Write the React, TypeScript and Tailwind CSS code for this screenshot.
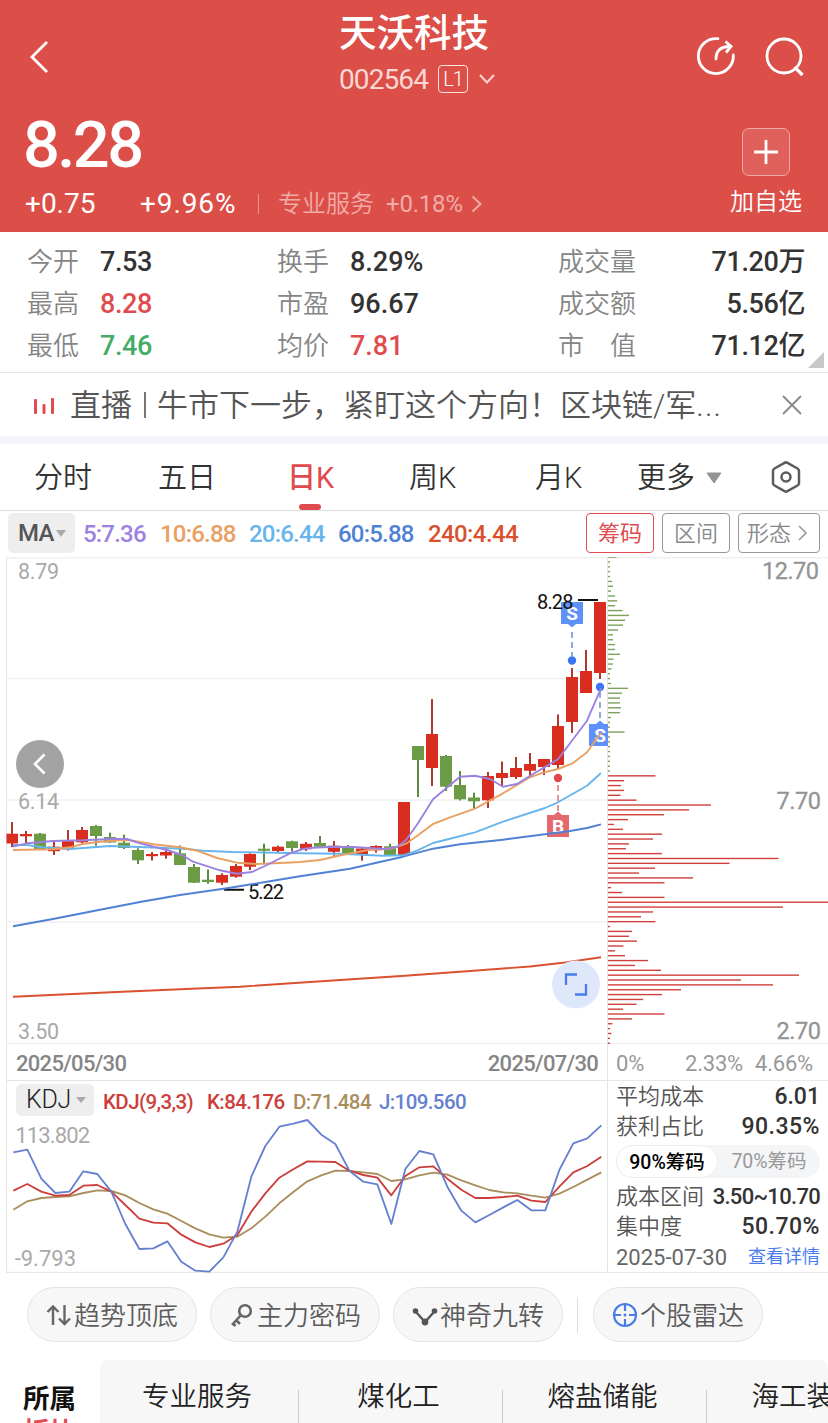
import { memo } from "react";

// ─── Types ─────────────────────────────────────────────────────────────────────
// [wick top, wick bottom, body top, body bottom, rising]
type Candle = [number, number, number, number, boolean];
type Point = [number, number];

// ─── Candles ───────────────────────────────────────────────────────────────────
const CANDLES: Candle[] = [
  [822, 847, 833.7, 843.5, true],
  [831, 846, 834, 836.3, true],
  [833, 849.3, 833.7, 849, false],
  [840, 855, 846.7, 851.2, true],
  [830, 850.5, 841, 849.3, true],
  [827, 843, 830, 842.3, true],
  [825, 845.7, 826, 836, false],
  [832.7, 842.7, 837, 842.5, false],
  [834.7, 849, 842.7, 848, false],
  [848.3, 864, 850, 860.3, false],
  [852, 860.5, 854, 856.2, true],
  [849.3, 858.7, 852, 855.5, true],
  [845.5, 865, 853.3, 865, false],
  [864, 883, 867, 882.7, false],
  [869.5, 883.7, 879.7, 882, false],
  [873.3, 885, 875, 882.7, true],
  [864, 877.7, 866, 876.7, true],
  [853.3, 870, 854, 866.7, true],
  [843.7, 864, 848.7, 850.8, false],
  [845.7, 852, 846.7, 851, true],
  [840.7, 851.7, 841.3, 848, false],
  [842, 851, 843.8, 849.2, true],
  [836, 846.8, 843, 846.8, false],
  [841, 855.7, 845.7, 851.8, true],
  [845, 853.3, 846, 853, false],
  [848.3, 860.7, 848.5, 855, true],
  [845.3, 852.7, 846, 850.3, true],
  [843.7, 855.3, 846.3, 855.3, false],
  [802, 855, 802, 855, true],
  [746, 797, 746, 760, false],
  [699, 786, 734, 768, true],
  [755, 791, 756, 786.7, false],
  [771, 800.5, 785, 799.3, false],
  [792.7, 808, 797.5, 801.3, false],
  [772, 808, 776, 800.3, true],
  [761.5, 786, 773, 778, true],
  [757, 779, 768, 777, true],
  [753, 777, 764, 770.7, true],
  [759, 775, 759, 767, true],
  [714.5, 769, 726, 765, true],
  [668, 733, 677, 722, true],
  [650, 693, 671, 693, true],
  [602, 679, 602, 673, true],
];

// ─── Moving averages ───────────────────────────────────────────────────────────
const MA_LINES: { color: string; points: Point[] }[] = [
  {
    color: "#d9512f",
    points: [[13, 996.7], [100, 992.7], [180, 989.3], [240, 986.7], [310, 982], [405, 975.8], [470, 971], [530, 966.5], [565, 962.5], [601, 957.3]],
  },
  {
    color: "#4f82d4",
    points: [[13, 926.3], [53, 919], [100, 909.7], [140, 902], [180, 895], [227, 888.3], [267, 881.7], [300, 876.3], [350, 868.7], [403, 856.7], [433, 848.7], [460, 844.3], [503, 839.7], [545, 834.3], [570, 831], [587, 828], [601, 824.3]],
  },
  {
    color: "#68b5ec",
    points: [[13, 845], [27, 845], [43, 847.3], [70, 849], [110, 846], [160, 847.7], [187, 849], [203, 850.7], [233, 852], [277, 852.7], [300, 853.3], [340, 853.7], [383, 855.7], [403, 855.3], [417, 850.7], [433, 843], [453, 838], [475, 832.3], [503, 821.7], [545, 808], [558, 802.3], [573, 793.7], [587, 785.7], [601, 773]],
  },
  {
    color: "#e9a063",
    points: [[13, 850], [53, 849.3], [70, 847.3], [83, 844], [100, 841.7], [123, 840], [130, 840.3], [153, 844.3], [180, 847.3], [197, 850.7], [217, 858], [237, 862.7], [257, 864], [280, 863], [300, 862], [320, 860], [343, 854.7], [367, 850.3], [393, 848.3], [406, 843.7], [418, 835.3], [433, 824], [450, 817.3], [475, 808.7], [503, 793.3], [530, 777.3], [543, 772.7], [558, 769], [572, 763.7], [587, 752.3], [601, 732.7]],
  },
  {
    color: "#9c82e0",
    points: [[13, 846.7], [27, 843.3], [53, 841], [83, 840.3], [110, 839], [127, 839], [140, 843.3], [167, 850], [182, 855], [193, 861.7], [220, 870.3], [237, 873.7], [252, 872], [267, 865], [290, 853.3], [303, 849], [313, 847.7], [333, 846.7], [357, 847.3], [385, 849], [397, 847], [406, 840], [418, 823.3], [433, 799.3], [460, 776.7], [475, 775.7], [490, 779], [503, 786.7], [517, 784], [533, 774], [558, 759.3], [587, 720.7], [601, 688.3]],
  },
];

// ─── Chip distribution: one bar per price step, top price first ────────────────
const CHIPS = [
  8.5, 2, 2, 2, 2, 4, 5, 3, 7, 9, 7, 14.5, 21, 17, 15, 10, 5, 5, 7, 7, 12, 5.5, 5, 3.5, 2,
  2, 3, 20, 14, 12, 12, 13, 12, 3, 2, 2, 16.5, 2, 2, 2, 2, 2, 2, 2, 2, 47.5, 16, 13, 16, 12.5,
  28.5, 103, 81, 56, 20, 6, 15, 54, 45, 21, 18, 54, 170.5, 121.5, 47, 31, 85, 56.5, 3, 14, 56.5,
  220, 175, 45, 33, 47.5, 2, 24, 21, 29, 15.5, 7, 17, 40, 27, 53, 191, 133, 165, 73, 54, 35,
  28.5, 15, 56.5, 24, 4.5, 2, 3.5, 2, 2,
];
const FIRST_RED_CHIP = 45;

// ─── KDJ series ────────────────────────────────────────────────────────────────
const K_LINE = [452, 432, 455, 467, 465, 437, 435, 455, 495, 536, 548, 550, 584, 607, 621, 611, 585, 515, 460, 413, 388, 364, 365, 366, 392, 405, 413, 466, 408, 382, 379, 416, 449, 474, 474, 471, 467, 482, 486, 440, 397, 378, 350];
const D_LINE = [509, 484, 474, 471, 469, 459, 451, 453, 466, 489, 508, 521, 543, 565, 583, 593, 590, 565, 530, 490, 456, 424, 406, 392, 393, 397, 402, 423, 418, 406, 398, 404, 421, 436, 450, 457, 460, 467, 473, 461, 441, 419, 397];
const J_LINE = [337, 329, 416, 459, 455, 394, 402, 455, 552, 627, 625, 604, 665, 692, 695, 652, 575, 410, 318, 260, 251, 240, 284, 312, 392, 425, 433, 552, 387, 333, 343, 440, 512, 547, 525, 502, 480, 511, 511, 390, 310, 295, 256];

const toPath = (pts: Point[]) => pts.map(([x, y]) => `${x},${y}`).join(" ");
const kdjPath = (values: number[]) => toPath(values.map((v, i): Point => [40 + i * 42, v]));

// ─── Header ────────────────────────────────────────────────────────────────────
function Header() {
  return (
    <header className="flex h-[232px] flex-col bg-[#dc4f49] text-white">
      <div className="grid h-[104px] grid-cols-[1fr_150px_1fr]">
        <svg className="mt-[39px] ml-[28px] h-9 w-6" viewBox="0 0 24 36" fill="none" stroke="currentColor" strokeWidth="2.8">
          <path d="M19 3 4 18 19 33" />
        </svg>
        <div className="flex flex-col pt-[13px]">
          <h1 className="text-[37.5px] leading-[40px] font-medium whitespace-nowrap">天沃科技</h1>
          <div className="mt-[10px] flex h-8 items-center whitespace-nowrap">
            <span className="w-[99px] shrink-0 pt-[2px] text-[28px] leading-8 tracking-[-0.9px] text-[#fbd6d4]">002564</span>
            <span className="flex h-[28px] w-[30px] shrink-0 items-center justify-center rounded-[4px] border-[1.5px] border-[#fae3e1] text-[20px] leading-none font-light tracking-[-1px]">
              L1
            </span>
            <svg className="ml-[11px] h-3 w-4 shrink-0" viewBox="0 0 16 12" fill="none" stroke="#fbd6d4" strokeWidth="2">
              <path d="m1 2 7 7.5L15 2" />
            </svg>
          </div>
        </div>
        <div className="mt-[34px] mr-[23px] flex justify-end gap-[27px]">
          <svg className="h-[44px] w-[44px]" viewBox="0 0 44 44" fill="none" stroke="currentColor" strokeWidth="2.8">
            <path d="M24 4.7A17.5 17.5 0 1 0 39.3 21" strokeLinecap="round" />
            <path d="M22 25c0-8 4-12.500 14-12.500" strokeLinecap="round" />
            <path d="m31.500 7.500 5.500 5-5 6" />
          </svg>
          <svg className="h-[44px] w-[40px]" viewBox="0 0 40 44" fill="none" stroke="currentColor" strokeWidth="2.8">
            <circle cx="19" cy="22" r="17" />
            <path d="m29.500 33 8 8" strokeWidth="3.2" />
          </svg>
        </div>
      </div>
      <div className="flex justify-between pr-[26px] pl-[25px]">
        <div className="flex flex-col">
          <div className="-ml-[2px] h-[82px] text-[65px] leading-[83px] font-medium tracking-[-2.600px]">8.28</div>
          <div className="mt-[2px] flex h-[32px] items-center text-[28px] leading-8">
            <span className="w-[115px]">+0.75</span>
            <span className="w-[118px] tracking-[0.9px]">+9.96%</span>
            <span className="mr-[19px] h-5 w-px bg-[#eb9592]" />
            <span className="w-[108px] text-[24px] font-[350] text-[#f2aba8]">专业服务</span>
            <span className="w-[85px] text-[24px] tracking-[-0.200px] text-[#f2aba8]">+0.18%</span>
            <svg className="h-[18px] w-3" viewBox="0 0 12 18" fill="none" stroke="#f2aba8" strokeWidth="2">
              <path d="m1.500 1.500 8 7.500-8 7.500" />
            </svg>
          </div>
        </div>
        <div className="mt-[24px] flex w-[72px] flex-col items-center">
          <div className="flex h-12 w-12 items-center justify-center rounded-[7px] border border-[#f0a9a6] bg-[#e0615b]">
            <svg className="h-6 w-6" viewBox="0 0 24 24" stroke="currentColor" strokeWidth="2.8">
              <path d="M12 0v24M0 12h24" />
            </svg>
          </div>
          <span className="mt-[10px] text-[24px] leading-8 font-[350] whitespace-nowrap">加自选</span>
        </div>
      </div>
    </header>
  );
}

// ─── Quote stats ───────────────────────────────────────────────────────────────
const STATS = [
  ["今开", "7.53", "text-[#333]", "换手", "8.29%", "text-[#333]", "成交量", "71.20", "万"],
  ["最高", "8.28", "text-[#df4b4f]", "市盈", "96.67", "text-[#333]", "成交额", "5.56", "亿"],
  ["最低", "7.46", "text-[#44ab69]", "均价", "7.81", "text-[#df4b4f]", "市　值", "71.12", "亿"],
];

function Stats() {
  return (
    <section className="relative flex h-[141px] flex-col border-b border-[#e6e6e6] pt-[9px] pr-[23px] pl-[27px]">
      {STATS.map(([l1, v1, c1, l2, v2, c2, l3, v3, unit]) => (
        <div key={l1} className="flex h-[42px] items-center text-[27px] leading-[42px] font-medium tracking-[-0.400px]">
          <span className="w-[73px] text-[26px] font-[350] tracking-normal text-[#858585]">{l1}</span>
          <span className={`w-[177px] ${c1}`}>{v1}</span>
          <span className="w-[73px] text-[26px] font-[350] tracking-normal text-[#858585]">{l2}</span>
          <span className={`w-[208px] tracking-normal ${c2}`}>{v2}</span>
          <span className="text-[26px] font-[350] tracking-normal text-[#858585]">{l3}</span>
          <span className="ml-auto text-[#333]">{v3}{unit}</span>
        </div>
      ))}
      <svg className="absolute right-1 bottom-1 h-4 w-4" viewBox="0 0 16 16">
        <path d="M16 0v16H0z" fill="#c8c8c8" />
      </svg>
    </section>
  );
}

function LiveBanner() {
  return (
    <section className="flex h-[71px] items-center border-b-8 border-[#f2f4f9] pr-[26px] pl-[33px] text-[31px] font-[350] text-[#555]">
      <svg className="mt-[3px] h-[17px] w-[22px]" viewBox="0 0 22 17" fill="#df4b4f">
        <rect x="1" y="1" width="3" height="15" rx="1" />
        <rect x="9.500" y="6" width="3" height="10" rx="1" />
        <rect x="18" y="0" width="3" height="16" rx="1" />
      </svg>
      <span className="mt-[3px] ml-[15px]">直播</span>
      <span className="mx-[12px] h-[26px] w-[2px] bg-[#777]" />
      <span className="mt-[3px] -ml-px whitespace-nowrap">
        牛市下一步，紧盯这个方向！区块链/军<span className="tracking-[1.200px]">...</span>
      </span>
      <svg className="ml-auto h-5 w-5" viewBox="0 0 20 20" stroke="#888" strokeWidth="1.8">
        <path d="m1 1 18 18M19 1 1 19" />
      </svg>
    </section>
  );
}

// ─── Period tabs ───────────────────────────────────────────────────────────────
function Tabs() {
  return (
    <nav className="flex h-[67px] border-b border-[#dcdcdc] pl-[34px] text-[29px] leading-[69px] font-[350] text-[#333]">
      <span className="w-[124px]">分时</span>
      <span className="w-[129px]">五日</span>
      <span className="flex w-[122px] flex-col font-medium text-[#df4b4f]">
        <span className="h-[60px]">日<span className="font-normal">K</span></span>
        <span className="ml-[12px] h-[6px] w-[22px] rounded-full bg-[#df4b4f]" />
      </span>
      <span className="w-[126px]">周K</span>
      <span className="w-[102px]">月K</span>
      <span>更多</span>
      <svg className="mt-[28px] ml-[11px] h-[12px] w-[16px]" viewBox="0 0 16 12">
        <path d="M1 1h14L8 11z" fill="#949494" stroke="#949494" strokeLinejoin="round" />
      </svg>
      <svg className="mt-[16px] ml-[48px] h-[34px] w-[32px]" viewBox="0 0 32 34" fill="none" stroke="#5c5c5c" strokeWidth="2.500">
        <path d="M14.500 2.800a3 3 0 0 1 3 0l10 5.700a3 3 0 0 1 1.500 2.600v11.800a3 3 0 0 1-1.500 2.600l-10 5.700a3 3 0 0 1-3 0l-10-5.700a3 3 0 0 1-1.500-2.600V11.100a3 3 0 0 1 1.500-2.600z" />
        <circle cx="16" cy="17" r="4.500" />
      </svg>
    </nav>
  );
}

function MaBar() {
  return (
    <div className="flex h-[46px] items-start pt-[2px] pr-2 pl-2 text-[24px] leading-[43px] font-medium tracking-[-0.800px]">
      <div className="flex h-[40px] w-[67px] items-center rounded-[5px] bg-[#eee] pl-[10px] text-[#555]">
        MA
        <svg className="ml-[2px] h-[7px] w-[10px]" viewBox="0 0 10 7">
          <path d="M0 0h10L5 7z" fill="#aaa" />
        </svg>
      </div>
      <span className="ml-[8px] w-[77px] text-[#9c82e0]">5:7.36</span>
      <span className="w-[89px] text-[#e9a063]">10:6.88</span>
      <span className="w-[89px] text-[#68b5ec]">20:6.44</span>
      <span className="w-[90px] text-[#4f82d4]">60:5.88</span>
      <span className="tracking-[-0.600px] text-[#d9512f]">240:4.44</span>
      <div className="ml-auto flex gap-2 text-[22px] leading-[39px] font-normal tracking-normal">
        <span className="h-10 w-[68px] rounded-[4px] border border-[#df4b4f] text-center text-[#df4b4f]">筹码</span>
        <span className="h-10 w-[68px] rounded-[4px] border border-[#999] text-center font-[350] text-[#888]">区间</span>
        <span className="flex h-10 w-[82px] items-center rounded-[4px] border border-[#999] pl-[8px] font-[350] text-[#888]">
          形态
          <svg className="ml-[7px] h-[16px] w-[10px]" viewBox="0 0 10 16" fill="none" stroke="#999" strokeWidth="1.600">
            <path d="m1 1 7 7-7 7" />
          </svg>
        </span>
      </div>
    </div>
  );
}

// ─── K-line chart ──────────────────────────────────────────────────────────────
function TradeMark({ x, y, label, color, up }: { x: number; y: number; label: string; color: string; up: boolean }) {
  return (
    <g>
      <rect x={x - 11} y={y} width="22" height="22" fill={color} />
      <path d={up ? `M${x - 4} ${y}l4-3.500 4 3.500z` : `M${x - 4} ${y + 22}l4 3.500 4-3.500z`} fill={color} />
      <text x={x} y={y + 18} fontSize="19" fontWeight="700" fill="#fff" textAnchor="middle">{label}</text>
    </g>
  );
}

const KLineChart = memo(function KLineChart() {
  return (
    <svg className="block h-[487px] w-[608px]" viewBox="0 557 608 487">
      <g stroke="#f1f1f1" strokeWidth="1.500">
        {[557.7, 678.500, 800, 922, 1043.500].map((y) => <path key={y} d={`M7 ${y}H608`} />)}
        <path d="M6.500 557V1044M607.500 557V1044" stroke="#e4e4e4" strokeWidth="1" />
      </g>
      <g fontSize="21.500" fill="#a9a9a9">
        <text x="18" y="579" textLength="41">8.79</text>
        <text x="18" y="809" textLength="41">6.14</text>
        <text x="18" y="1038.500" textLength="41">3.50</text>
      </g>
      {CANDLES.map(([hi, lo, top, bottom, rising], i) => {
        const x = 12 + i * 14;
        return (
          <g key={i}>
            <rect x={x - 1} y={hi} width="2" height={lo - hi} fill={rising ? "#b03a30" : "#5c8a42"} />
            <rect x={Math.max(x - 6, 6.500)} y={top} width={i === 0 ? 11.500 : 12} height={bottom - top} fill={rising ? "#d92d20" : "#6b9c45"} />
          </g>
        );
      })}
      <path d="M578 600H598M224 889.700H244" stroke="#111" strokeWidth="2" />
      <text x="248" y="898.500" fontSize="20" fill="#111" textLength="36">5.22</text>
      <g strokeWidth="2" strokeDasharray="6 4">
        <path d="M572 632V656" stroke="#8aaade" />
        <path d="M600 692V720" stroke="#8aaade" />
        <path d="M558 785V812" stroke="#e3959a" />
      </g>
      <circle cx="572" cy="660.500" r="4.200" fill="#3b74f2" />
      <circle cx="600" cy="687" r="4.200" fill="#3b74f2" />
      <circle cx="558" cy="778" r="4.200" fill="#e2484c" />
      <TradeMark x={572} y={602} label="S" color="#5f91f8" up={false} />
      <TradeMark x={600} y={724} label="S" color="#5f91f8" up />
      <TradeMark x={558} y={815} label="B" color="#e5686e" up />
      <text x="537" y="608.500" fontSize="20" fill="#111" textLength="36.500">8.28</text>
      {MA_LINES.map(({ color, points }) => (
        <polyline key={color} points={toPath(points)} fill="none" stroke={color} strokeWidth="1.900" strokeLinejoin="round" />
      ))}
      <circle cx="40" cy="764" r="24" fill="#a3a3a3" />
      <path d="m44.500 754.500-9.500 9.500 9.500 9.500" fill="none" stroke="#fff" strokeWidth="2.600" />
      <circle cx="576" cy="984.500" r="24" fill="#dfe8fa" />
      <path d="M566 985V974.500H577M586 984V994.500H575" fill="none" stroke="#4a7dea" strokeWidth="2.300" />
    </svg>
  );
});

const ChipChart = memo(function ChipChart() {
  return (
    <svg className="block h-[487px] w-[220px]" viewBox="608 557 220 487">
      <path d="M608 557.700H828M608 1043.500H828" stroke="#f1f1f1" strokeWidth="1.500" />
      {CHIPS.map((w, i) => (
        <rect key={i} x="608" y={556.400 + i * 4.861} width={w} height="1.400" fill={i < FIRST_RED_CHIP ? "#7ba35c" : "#d0403c"} />
      ))}
      <g fontSize="23.500" fill="#949494" stroke="#949494" strokeWidth="0.300">
        <text x="762" y="579" textLength="57">12.70</text>
        <text x="776.500" y="809" textLength="44.500">7.70</text>
        <text x="776.500" y="1039" textLength="44.500">2.70</text>
      </g>
    </svg>
  );
});

const KdjChart = memo(function KdjChart() {
  return (
    <svg className="block h-[154px] w-[608px]" viewBox="0 237 1824 462">
      <path d="M19.500 237V699M1822.500 237V699M19.500 697H1824" stroke="#e4e4e4" strokeWidth="3" />
      <g fontSize="66" fill="#a9a9a9">
        <text x="46" y="308" textLength="224">113.802</text>
        <text x="44" y="678" textLength="184">-9.793</text>
      </g>
      <g fill="none" strokeWidth="5.500" strokeLinejoin="round">
        <polyline points={kdjPath(D_LINE)} stroke="#aa8d5c" />
        <polyline points={kdjPath(K_LINE)} stroke="#cc3e3a" />
        <polyline points={kdjPath(J_LINE)} stroke="#6580d0" />
      </g>
    </svg>
  );
});

function ChartArea() {
  return (
    <section className="flex h-[717px]">
      <div className="flex w-[608px] flex-col">
        <KLineChart />
        <div className="ml-[6px] flex h-[36px] justify-between border-x border-[#e4e4e4] pr-[9px] pl-[9px] text-[22px] leading-[40px] font-medium tracking-[-0.700px] text-[#858585]">
          <span>2025/05/30</span>
          <span>2025/07/30</span>
        </div>
        <div className="ml-[6px] flex h-[39px] border-x border-t border-[#e4e4e4] pt-[3px] pl-[9px] text-[20.500px] leading-[36px] font-medium tracking-[-0.600px]">
          <div className="flex h-[32px] w-[78px] items-center rounded-[5px] bg-[#eee] pl-[10px] text-[25px] font-light tracking-[-0.300px] text-[#222]">
            KDJ
            <svg className="ml-[5px] h-[6px] w-[10px]" viewBox="0 0 10 6">
              <path d="M0 0h10L5 6z" fill="#aaa" />
            </svg>
          </div>
          <span className="ml-[9px] w-[104px] text-[#cc3e3a]">KDJ(9,3,3)</span>
          <span className="w-[86px] text-[#cc3e3a]">K:84.176</span>
          <span className="w-[86px] text-[#aa8d5c]">D:71.484</span>
          <span className="text-[#6580d0]">J:109.560</span>
        </div>
        <KdjChart />
      </div>
      <div className="flex w-[220px] flex-col">
        <ChipChart />
        <div className="flex h-[36px] pl-[8px] text-[22px] leading-[40px] tracking-[-0.200px] text-[#999]">
          <span className="w-[69px]">0%</span>
          <span className="w-[70px]">2.33%</span>
          <span>4.66%</span>
        </div>
        <div className="flex h-[193px] flex-col border-y border-[#e8e8e8] pt-px pr-[8px] pl-[8px] text-[22px] leading-[30px]">
          <div className="flex h-[30px] justify-between">
            <span className="font-[350] text-[#555]">平均成本</span>
            <span className="text-[23px] font-medium text-[#333]">6.01</span>
          </div>
          <div className="flex h-[30px] justify-between">
            <span className="font-[350] text-[#555]">获利占比</span>
            <span className="text-[23px] font-medium tracking-[0.500px] text-[#333]">90.35%</span>
          </div>
          <div className="mt-[3px] flex h-[33px] rounded-full bg-[#f4f5f7] text-[19.500px] leading-[34px]">
            <span className="w-[102px] rounded-full border border-[#eee] bg-white text-center leading-[33px] font-medium text-black">90%筹码</span>
            <span className="flex-1 text-center text-[#999]">70%筹码</span>
          </div>
          <div className="mt-[4px] flex h-[30px] justify-between whitespace-nowrap">
            <span className="font-[350] text-[#555]">成本区间</span>
            <span className="font-medium tracking-[-0.700px] text-[#333]">3.50~10.70</span>
          </div>
          <div className="flex h-[30px] justify-between">
            <span className="font-[350] text-[#555]">集中度</span>
            <span className="text-[23px] font-medium tracking-[0.500px] text-[#333]">50.70%</span>
          </div>
          <div className="flex h-[30px] justify-between">
            <span className="pt-px text-[#666]">2025-07-30</span>
            <span className="text-[18px] text-[#4a7dea]">查看详情</span>
          </div>
        </div>
      </div>
    </section>
  );
}

// ─── Tool pills ────────────────────────────────────────────────────────────────
function Pills() {
  const pill = "flex h-[55px] w-[170px] items-center justify-center rounded-full border border-[#e4e4e4] bg-[#f7f7f7] whitespace-nowrap";
  return (
    <section className="flex h-[86px] items-start pt-[13px] pl-[27px] text-[26px] leading-none font-[350] text-[#5c5c5c]">
      <div className={pill}>
        <svg className="mr-[2px] h-[26px] w-[26px]" viewBox="0 0 26 26" fill="none" stroke="#666" strokeWidth="2.400">
          <path d="M7 23V4M1.500 10 7 4.500 12.500 10" />
          <path d="M18.500 3v19M24 16.500 18.500 22 13 16.500" />
        </svg>
        <span className="pt-[2px]">趋势顶底</span>
      </div>
      <div className={`${pill} ml-[13px]`}>
        <svg className="mr-[2px] h-[26px] w-[26px]" viewBox="0 0 26 26" fill="none" stroke="#666" strokeWidth="2.600">
          <circle cx="16" cy="9" r="5.800" />
          <path d="M12 13 3 23M7 18l4 4M3.500 21l3 3" />
        </svg>
        <span className="pt-[2px]">主力密码</span>
      </div>
      <div className={`${pill} ml-[13px]`}>
        <svg className="mr-[2px] h-[26px] w-[26px]" viewBox="0 0 26 26" fill="#555" stroke="#555" strokeWidth="2.400">
          <path d="m4 10 9 10 9-10" fill="none" />
          <circle cx="3.500" cy="9" r="1.600" />
          <circle cx="13" cy="20" r="2.200" />
          <circle cx="22.500" cy="9" r="1.600" />
        </svg>
        <span className="pt-[2px]">神奇九转</span>
      </div>
      <span className="mt-[10px] mr-[15px] ml-[14px] h-[36px] w-px bg-[#ddd]" />
      <div className={pill}>
        <svg className="mr-[2px] h-[26px] w-[26px]" viewBox="0 0 26 26" fill="none" stroke="#4a7dea" strokeWidth="2.200">
          <circle cx="13" cy="13" r="11" />
          <path d="M13 2v7M13 17v7M2 13h7M17 13h7" />
          <circle cx="13" cy="13" r="1.500" fill="#4a7dea" stroke="none" />
        </svg>
        <span className="pt-[2px]">个股雷达</span>
      </div>
    </section>
  );
}

// ─── Related sectors ───────────────────────────────────────────────────────────
const SECTORS = ["专业服务", "煤化工", "熔盐储能", "海工装备"];

function Sectors() {
  return (
    <section className="flex h-[63px] overflow-hidden">
      <div className="w-[100px] shrink-0 pt-[22px] pl-[23px] text-[26.500px] leading-[33px] font-bold text-[#111]">
        <div>所属</div>
        <div className="text-[#df4b4f]">板块</div>
      </div>
      <div className="flex w-[728px] shrink-0 overflow-hidden rounded-t-[8px] bg-[#f7f7f7]">
        {SECTORS.map((name, i) => (
          <div key={name} className={`flex shrink-0 ${i === 0 ? "w-[199px]" : "w-[204px]"}`}>
            <span className="flex-1 pt-[17px] pr-[4px] text-center text-[27.500px] leading-10 font-[350] text-[#222]">{name}</span>
            <span className="mt-[30px] w-px bg-[#ccc]" />
          </div>
        ))}
      </div>
    </section>
  );
}

export default function App() {
  return (
    <main className="flex h-[1423px] w-[828px] flex-col overflow-hidden bg-white font-['Roboto','Noto_Sans_CJK_SC',sans-serif]">
      <Header />
      <Stats />
      <LiveBanner />
      <Tabs />
      <MaBar />
      <ChartArea />
      <Pills />
      <Sectors />
    </main>
  );
}
